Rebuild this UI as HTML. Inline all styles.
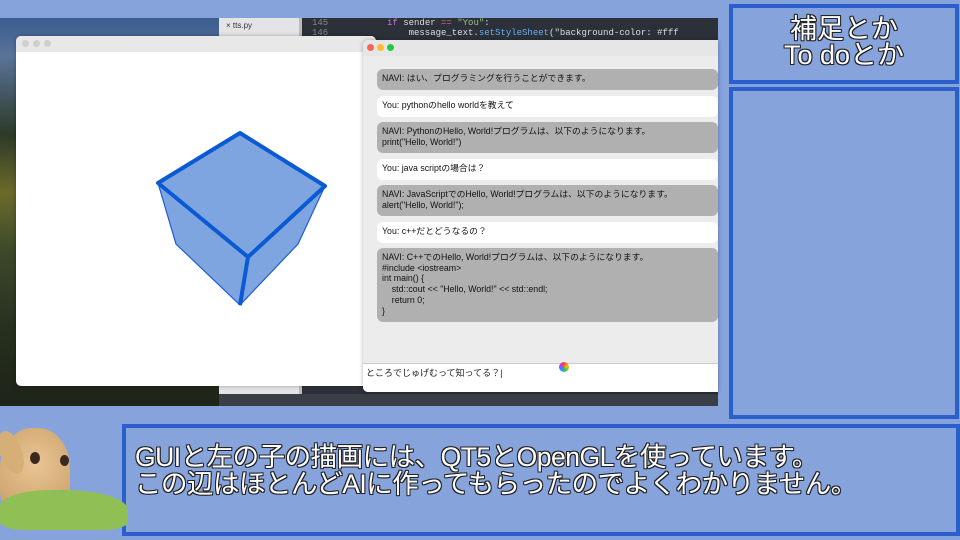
<!DOCTYPE html>
<html><head><meta charset="utf-8"><style>
*{margin:0;padding:0;box-sizing:border-box}
body{width:960px;height:540px;background:#86a3dc;position:relative;overflow:hidden;font-family:"Liberation Sans","Noto Sans CJK JP",sans-serif}
.abs{position:absolute}
.bub{position:absolute;left:377px;width:341px;border-radius:6px;font-size:8.8px;line-height:11px;padding:4px 5px;color:#111;white-space:pre}
.g{background:#b0b0b0}.w{background:#fff}
.panel{position:absolute;border:4px solid #2a5fcc;background:#86a3dc}
.out{color:#fff;text-shadow:-1px -1px 0 #222,1px -1px 0 #222,-1px 1px 0 #222,1px 1px 0 #222,0 1px 0 #222,0 -1px 0 #222,1px 0 0 #222,-1px 0 0 #222}
</style></head><body>
<div class="abs" style="left:0;top:18px;width:219px;height:388px;background:linear-gradient(180deg,#3a5d8f 0%,#5a7399 10%,#2d3a28 30%,#6b6a2a 45%,#3b4a2a 60%,#27301f 80%,#1d2418 100%)"></div>
<div class="abs" style="left:219px;top:18px;width:80px;height:388px;background:#e4e4e6"></div>
<div class="abs" style="left:226px;top:21px;font-size:8px;color:#333">× tts.py</div>
<div class="abs" style="left:299px;top:18px;width:3px;height:388px;background:#bbb"></div>
<div class="abs" style="left:302px;top:18px;width:416px;height:388px;background:#2b3039"></div>
<div class="abs" style="left:312px;top:18px;font:9px 'Liberation Mono',monospace;color:#888;line-height:10px">145<br>146</div>
<div class="abs" style="left:387px;top:18px;font:9px 'Liberation Mono',monospace;color:#ddd;line-height:10px;white-space:pre"><span style="color:#c678dd">if</span> sender <span style="color:#e06c75">==</span> <span style="color:#98c379">"You"</span>:
    message_text.<span style="color:#61afef">setStyleSheet</span>("background-color: #fff</div>
<div class="abs" style="left:219px;top:394px;width:499px;height:12px;background:#3a3f47"></div>
<div class="abs" style="left:16px;top:36px;width:360px;height:350px;background:#fff;border-radius:5px;overflow:hidden;box-shadow:0 0 4px rgba(0,0,0,.3)">
<div style="height:16px;background:#e8e8e8;position:relative">
<span class="abs" style="left:6px;top:4px;width:7px;height:7px;border-radius:50%;background:#cfcfcf"></span>
<span class="abs" style="left:17px;top:4px;width:7px;height:7px;border-radius:50%;background:#cfcfcf"></span>
<span class="abs" style="left:28px;top:4px;width:7px;height:7px;border-radius:50%;background:#cfcfcf"></span></div>
</div>
<svg class="abs" style="left:0;top:0" width="360" height="400">
<polygon points="240,133 158,183 176,244 240,305 298,244 325,186" fill="#7fa5e0" stroke="#1a5fd0" stroke-width="1.2"/>
<polygon points="240,133 158,183 248,257 325,186" fill="#7fa5e0" stroke="#0a5ad4" stroke-width="4" stroke-linejoin="round"/>
<line x1="248" y1="257" x2="240" y2="305" stroke="#0a5ad4" stroke-width="4"/>
</svg>
<div class="abs" style="left:363px;top:40px;width:355px;height:352px;background:#ececec;border-radius:5px 0 0 5px;overflow:hidden;box-shadow:0 0 4px rgba(0,0,0,.3)">
<div style="height:16px;background:#e6e6e6;position:relative">
<span class="abs" style="left:4px;top:4px;width:7px;height:7px;border-radius:50%;background:#fe5f57"></span>
<span class="abs" style="left:14px;top:4px;width:7px;height:7px;border-radius:50%;background:#febc2e"></span>
<span class="abs" style="left:24px;top:4px;width:7px;height:7px;border-radius:50%;background:#28c840"></span></div>
<div class="abs" style="left:0;top:323px;width:355px;height:29px;background:#fff;border-top:1px solid #ccc"></div>
<div class="abs" style="left:3px;top:326px;font-size:9px;color:#222">ところでじゅげむって知ってる？|</div>
<div class="abs" style="left:196px;top:322px;width:10px;height:10px;border-radius:50%;background:conic-gradient(#f44,#fb0,#4c4,#29f,#a4f,#f44)"></div>
</div>
<div class="bub g" style="top:69px;height:21px">NAVI: はい、プログラミングを行うことができます。</div>
<div class="bub w" style="top:96px;height:21px">You: pythonのhello worldを教えて</div>
<div class="bub g" style="top:122px;height:31px">NAVI: PythonのHello, World!プログラムは、以下のようになります。
print("Hello, World!")</div>
<div class="bub w" style="top:159px;height:21px">You: java scriptの場合は？</div>
<div class="bub g" style="top:185px;height:31px">NAVI: JavaScriptでのHello, World!プログラムは、以下のようになります。
alert("Hello, World!");</div>
<div class="bub w" style="top:222px;height:21px">You: c++だとどうなるの？</div>
<div class="bub g" style="top:248px;height:74px;line-height:10.7px">NAVI: C++でのHello, World!プログラムは、以下のようになります。
#include &lt;iostream&gt;
int main() {
    std::cout &lt;&lt; "Hello, World!" &lt;&lt; std::endl;
    return 0;
}</div>
<div class="panel" style="left:729px;top:4px;width:230px;height:80px"></div>
<div class="abs out" style="left:729px;top:16px;width:230px;text-align:center;font-size:27px;line-height:26px">補足とか<br>To doとか</div>
<div class="panel" style="left:729px;top:87px;width:230px;height:332px"></div>
<div class="panel" style="left:122px;top:424px;width:838px;height:112px"></div>
<div class="abs out" style="left:135px;top:444px;font-size:26.5px;line-height:27px;white-space:nowrap;letter-spacing:-0.5px">GUIと左の子の描画には、QT5とOpenGLを使っています。<br>この辺はほとんどAIに作ってもらったのでよくわかりません。</div>
<div class="abs" style="left:0;top:428px;width:70px;height:90px;border-radius:45% 45% 30% 30%;background:radial-gradient(circle at 50% 40%,#e8c594,#c79a62)"></div>
<div class="abs" style="left:0;top:430px;width:22px;height:45px;border-radius:50%;background:#d6ae78;transform:rotate(-20deg)"></div>
<div class="abs" style="left:30px;top:452px;width:10px;height:12px;border-radius:50%;background:#3a2a1e"></div>
<div class="abs" style="left:60px;top:455px;width:9px;height:11px;border-radius:50%;background:#3a2a1e"></div>
<div class="abs" style="left:0;top:490px;width:128px;height:40px;border-radius:40% 50% 20% 20%;background:#8fbf55"></div>
</body></html>
